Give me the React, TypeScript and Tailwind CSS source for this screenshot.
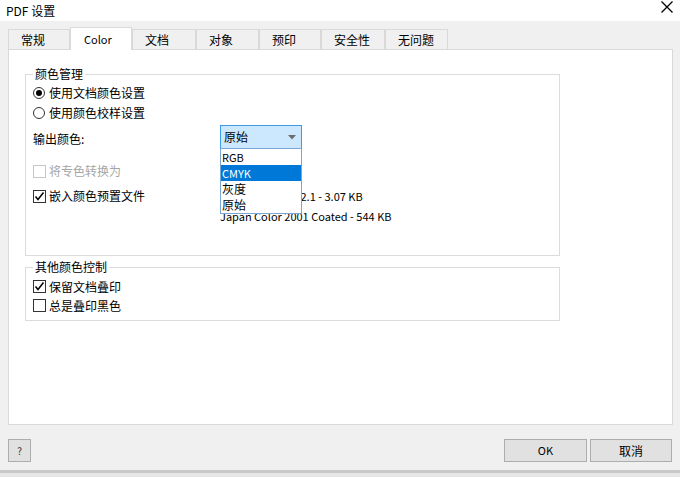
import React from "react";

const FONT = { fontFamily: '"Noto Sans CJK SC", "Noto Sans", sans-serif' };

const TABS: { label: string; w: number; latin?: boolean }[] = [
  { label: "常规", w: 62 },
  { label: "Color", w: 62, latin: true },
  { label: "文档", w: 64 },
  { label: "对象", w: 63 },
  { label: "预印", w: 62 },
  { label: "安全性", w: 64 },
  { label: "无问题", w: 63 },
];

function Check({ checked, disabled }: { checked?: boolean; disabled?: boolean }) {
  return (
    <span
      className={[
        "flex h-[13px] w-[13px] shrink-0 items-center justify-center border bg-white",
        disabled ? "border-[#c8c8c8]" : "border-[#333333]",
      ].join(" ")}
    >
      {checked && (
        <svg width="11" height="11" viewBox="0 0 11 11">
          <polyline points="1.5,5.5 4,8.5 9.5,1.5" fill="none" stroke="#000" strokeWidth="1.5" />
        </svg>
      )}
    </span>
  );
}

function Radio({ on }: { on?: boolean }) {
  return (
    <span className="flex h-[12px] w-[12px] shrink-0 items-center justify-center rounded-full border border-[#333333] bg-white">
      {on && <span className="h-[6px] w-[6px] rounded-full bg-black" />}
    </span>
  );
}

export default function App() {
  return (
    <div className="flex h-[477px] w-[680px] flex-col overflow-hidden bg-[#f0f0f0] text-[12px] text-black" style={FONT}>
      {/* 标题栏 */}
      <div className="flex h-[21px] items-center justify-between bg-white pl-[6px] pr-[7px]">
        <span className="leading-none">PDF 设置</span>
        <svg width="12" height="12" viewBox="0 0 12 12" className="-mt-[8px]">
          <path d="M0.5 0.5 L11.5 11.5 M11.5 0.5 L0.5 11.5" stroke="#000" strokeWidth="1.3" />
        </svg>
      </div>

      {/* 标签页 */}
      <div className="flex h-[28px] items-end pl-[8px]">
        {TABS.map((t, i) => {
          const active = i === 1;
          return (
            <div
              key={t.label}
              style={{ width: t.w }}
              className={[
                "relative flex items-center border-x border-t border-[#d9d9d9] pl-[12px]",
                active ? "z-10 -mb-px h-[23px] bg-white pl-[13px]" : "h-[20px] bg-[#f0f0f0]",
                t.latin ? "text-[11px]" : "",
              ].join(" ")}
            >
              {t.label}
            </div>
          );
        })}
      </div>

      {/* 面板 */}
      <div className="ml-[8px] mr-[7px] h-[376px] border border-[#d9d9d9] bg-white pl-[16px] pt-[16px]">
        <fieldset className="w-[535px] border border-[#dcdcdc] pb-[29px] pl-[7px]">
          <legend className="px-[2px] leading-[16px]">颜色管理</legend>
          <div className="mt-px flex h-[20px] items-center gap-[4px]">
            <Radio on />
            <span>使用文档颜色设置</span>
          </div>
          <div className="flex h-[20px] items-center gap-[4px]">
            <Radio />
            <span>使用颜色校样设置</span>
          </div>
          <div className="mt-[2px] flex h-[24px] items-center">
            <span className="w-[187px] pt-[3px]">输出颜色:</span>
            <div className="relative">
              <div className="flex h-[24px] w-[82px] items-center justify-between border border-[#3d9be9] bg-[#cce8ff] pl-[3px] pr-[5px]">
                <span>原始</span>
                <svg width="8" height="5" viewBox="0 0 8 5">
                  <polygon points="0,0 8,0 4,4.5" fill="#6d6d6d" />
                </svg>
              </div>
              <div className="absolute left-0 top-[23px] z-20 flex w-[82px] flex-col border border-[#7aa7d6] bg-white py-px">
                <span className="h-[15px] pl-[1px] text-[11px] leading-[15px]">RGB</span>
                <span className="h-[16px] bg-[#0078d7] pl-[1px] text-[11px] leading-[16px] text-white">CMYK</span>
                <span className="h-[16px] pl-[1px] leading-[16px]">灰度</span>
                <span className="h-[15px] pl-[1px] leading-[15px]">原始</span>
              </div>
            </div>
          </div>
          <div className="mt-[12px] flex h-[20px] items-center gap-[3px] text-[#a6a6a6]">
            <Check disabled />
            <span>将专色转换为</span>
          </div>
          <div className="mt-[5px] flex h-[20px] items-center">
            <div className="flex w-[187px] items-center gap-[3px]">
              <Check checked />
              <span>嵌入颜色预置文件</span>
            </div>
            <span className="text-[11px]">sRGB IEC61966-2.1 - 3.07 KB</span>
          </div>
          <div className="flex h-[20px] items-center pl-[187px] text-[11px]">Japan Color 2001 Coated - 544 KB</div>
        </fieldset>

        <fieldset className="mt-[3px] w-[535px] border border-[#dcdcdc] pb-[5px] pl-[7px]">
          <legend className="px-[2px] leading-[16px]">其他颜色控制</legend>
          <div className="mt-[2px] flex h-[19px] items-center gap-[3px]">
            <Check checked />
            <span>保留文档叠印</span>
          </div>
          <div className="flex h-[19px] items-center gap-[3px]">
            <Check />
            <span>总是叠印黑色</span>
          </div>
        </fieldset>
      </div>

      {/* 底部按钮 */}
      <div className="flex h-[45px] items-start pl-[8px] pr-[8px] pt-[14px]">
        <button className="flex h-[23px] w-[23px] items-center justify-center border border-[#adadad] bg-[#e1e1e1] text-[10px] text-[#333]">
          ?
        </button>
        <div className="ml-auto flex gap-[3px]">
          <button className="h-[23px] w-[83px] border border-[#adadad] bg-[#e1e1e1] text-[11px]">OK</button>
          <button className="h-[23px] w-[82px] border border-[#adadad] bg-[#e1e1e1]">取消</button>
        </div>
      </div>
      <div className="h-[3px] bg-[#c9c9c9]" />
      <div className="flex-1 bg-[#e6e6e6]" />
    </div>
  );
}
